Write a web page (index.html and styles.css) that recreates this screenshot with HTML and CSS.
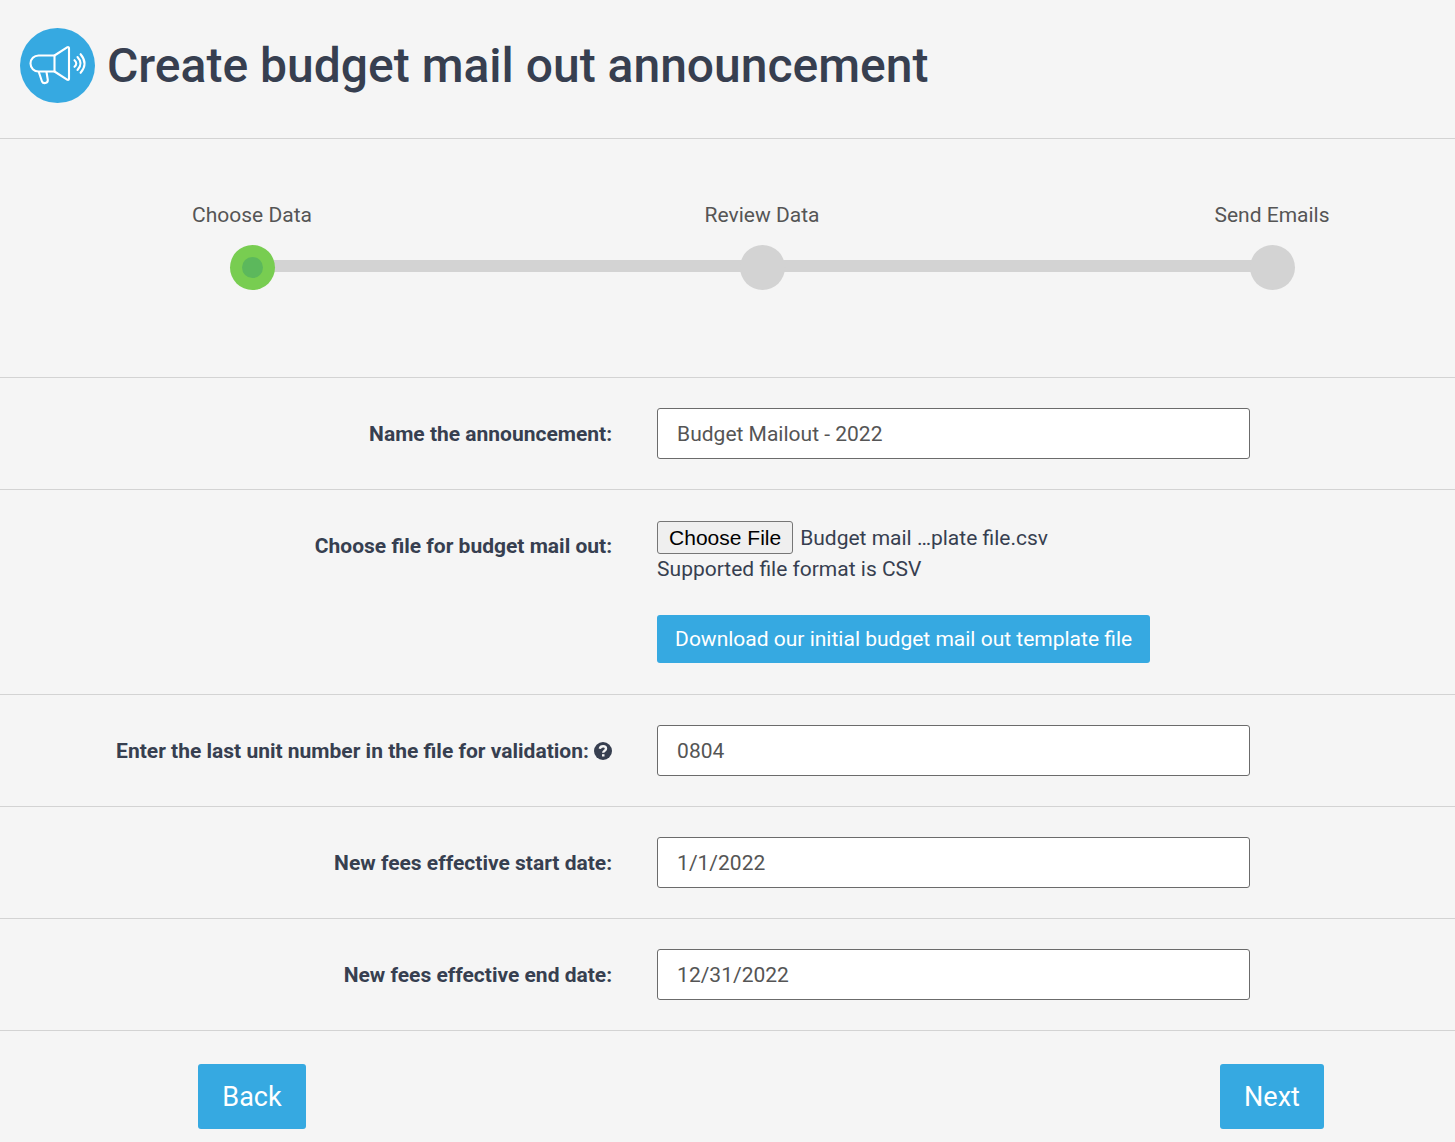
FILE: index.html
```html
<!DOCTYPE html>
<html lang="en">
<head>
  <meta charset="utf-8">
  <meta name="viewport" content="width=device-width, initial-scale=1">
  <title>Create budget mail out announcement</title>
  <link rel="stylesheet" href="styles.css">
</head>
<body>
  <header class="page-header">
    <svg class="page-icon" viewBox="0 0 75 75" aria-hidden="true">
      <circle cx="37.5" cy="37.5" r="37.5" fill="#36a9e1"/>
      <g fill="none" stroke="#fff" stroke-width="2.1" stroke-linecap="round" stroke-linejoin="round">
        <path d="M34.500 27.500H18.500a8 8 0 0 0-8 8a8 8 0 0 0 8 8H34.500z"/>
        <path d="M34.500 27.500L47.500 19.200Q49 18.800 49 20.500V50.500Q49 52.200 47.500 51.800L34.500 43.500"/>
        <path d="M18.800 44L22 53.500C23.200 56 28 55.500 27.800 52L26.500 44"/>
        <path d="M54.500 32.200Q58 35.500 54.500 38.800"/>
        <path d="M57.500 29Q63.500 35.500 57.500 42"/>
        <path d="M60.600 26.200Q68.500 35.500 60.600 44.800"/>
      </g>
    </svg>
    <h1 class="page-title">Create budget mail out announcement</h1>
  </header>

  <main>
    <ol class="steps">
      <li class="step step-active"><span class="step-label">Choose Data</span><span class="step-dot"></span></li>
      <li class="step"><span class="step-label">Review Data</span><span class="step-dot"></span></li>
      <li class="step"><span class="step-label">Send Emails</span><span class="step-dot"></span></li>
    </ol>

    <form>
      <div class="row">
        <label class="row-label" for="name">Name the announcement:</label>
        <input class="text-input" id="name" type="text" value="Budget Mailout - 2022">
      </div>
      <div class="row">
        <label class="row-label" for="file">Choose file for budget mail out:</label>
        <div class="file-field">
          <div class="file-picker">
            <input class="file-input" id="file" type="file" accept=".csv">
            <label class="file-button" for="file">Choose File</label>
            <span>Budget mail …plate file.csv</span>
          </div>
          <p class="hint">Supported file format is CSV</p>
          <button class="button" type="button">Download our initial budget mail out template file</button>
        </div>
      </div>
      <div class="row">
        <label class="row-label" for="unit">Enter the last unit number in the file for validation:
          <svg class="help" viewBox="0 0 18 18" aria-hidden="true">
            <circle cx="9" cy="9" r="9" fill="#373f50"/>
            <path d="M5.800 6.800C6.500 3.400 12 3.500 12 6.800C12 8.800 9.200 8.700 9.200 10.800" fill="none" stroke="#f5f5f5" stroke-width="2.400"/>
            <path d="M8 12.200h2.500v2.300H8z" fill="#f5f5f5"/>
          </svg></label>
        <input class="text-input" id="unit" type="text" value="0804">
      </div>
      <div class="row">
        <label class="row-label" for="start">New fees effective start date:</label>
        <input class="text-input" id="start" type="text" value="1/1/2022">
      </div>
      <div class="row">
        <label class="row-label" for="end">New fees effective end date:</label>
        <input class="text-input" id="end" type="text" value="12/31/2022">
      </div>
      <div class="actions">
        <div class="action"><button class="button button-large" type="button">Back</button></div>
        <div class="action"><button class="button button-large" type="submit">Next</button></div>
      </div>
    </form>
  </main>
</body>
</html>
```
FILE: styles.css
```css
* {
  box-sizing: border-box;
}

body {
  margin: 0;
  background: #f5f5f5;
  color: #373f50;
  font: 21px/30px Roboto, sans-serif;
}

.page-header {
  display: flex;
  align-items: center;
  gap: 12px;
  padding: 28px 20px 35px;
  border-bottom: 1px solid #d3d3d3;
}

.page-icon {
  flex: none;
  width: 75px;
  height: 75px;
}

.page-title {
  margin: 0;
  font-size: 48px;
  font-weight: 500;
  line-height: 60px;
}

.steps {
  display: flex;
  justify-content: space-between;
  margin: 0;
  padding: 61px 123px 87px 192px;
  border-bottom: 1px solid #d3d3d3;
  color: #555;
  list-style: none;
}

.step {
  position: relative;
  display: flex;
  flex: 1;
  flex-direction: column;
  gap: 15px;
}

.step:last-child {
  flex: none;
}

.step-label {
  width: 120px;
  text-align: center;
  white-space: nowrap;
}

.step-dot {
  position: relative;
  display: grid;
  place-items: center;
  width: 45px;
  height: 45px;
  margin-left: 38px;
  border-radius: 50%;
  background: #d3d3d3;
}

.step:not(:last-child)::before {
  content: "";
  position: absolute;
  bottom: 18px;
  left: 60px;
  width: 100%;
  height: 12px;
  background: #d3d3d3;
}

.step-active .step-dot {
  background: #78cd51;
}

.step-active .step-dot::after {
  content: "";
  width: 21px;
  height: 21px;
  border-radius: 50%;
  background: #5cb85c;
}

.row {
  display: grid;
  grid-template-columns: 42% 1fr;
  column-gap: 46px;
  align-items: start;
  padding: 30px 0;
  border-bottom: 1px solid #d3d3d3;
}

.row-label {
  margin-right: -1px;
  font-weight: 700;
  line-height: 52px;
  text-align: right;
}

.text-input {
  width: calc(100% - 205px);
  height: 51px;
  padding: 0 19px;
  border: 1px solid #6b6b6b;
  border-radius: 3px;
  background: #fff;
  color: #555;
  font: inherit;
}

.row-label,
.text-input {
  margin-bottom: -1px;
}

.row {
  min-height: 112px;
}

.help {
  width: 18px;
  height: 18px;
  vertical-align: -2px;
}

.file-field {
  padding: 1px 0;
}

.file-picker {
  position: relative;
  display: flex;
  align-items: center;
  gap: 7px;
}

.file-input {
  position: absolute;
  width: 136px;
  height: 33px;
  opacity: 0;
}

.file-button {
  padding: 0 11px;
  border: 1px solid #767676;
  border-radius: 3px;
  background: #efefef;
  color: #000;
  font: 21px/31px "Liberation Sans", Arial, sans-serif;
}

.hint {
  margin: 0 0 31px;
}

.button {
  display: block;
  height: 48px;
  padding: 0 18px;
  border: 0;
  border-radius: 3px;
  background: #36a9e1;
  color: #fff;
  font: inherit;
}

.button-large {
  height: 65px;
  padding: 0 24px;
  font-size: 27px;
}

.actions {
  display: flex;
  justify-content: space-between;
  padding: 33px 123px 13px 192px;
}

.action {
  display: flex;
  justify-content: center;
  width: 120px;
}
```
